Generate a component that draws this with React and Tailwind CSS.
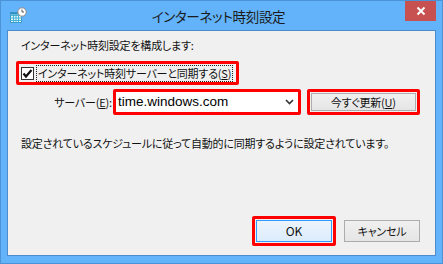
const jp = "font-['Noto_Sans_CJK_JP',sans-serif] [font-feature-settings:'palt'] whitespace-nowrap";

function AppIcon() {
  return (
    <svg width="18" height="18" viewBox="0 0 18 18">
      <rect x="1.5" y="5.5" width="11" height="10" fill="#e8f6fb" stroke="#3a9cc4" />
      <path d="M1.5 8.5H12.5M1.5 11H12.5M1.5 13.5H12.5M4.5 5.5V15.5M7 5.5V15.5M9.5 5.5V15.5" stroke="#47b4d8" strokeWidth="1" />
      <rect x="1.5" y="5.5" width="11" height="2" fill="#2f8fc0" />
      <circle cx="13" cy="5" r="4.2" fill="#ffffff" stroke="#8a8a8a" strokeWidth="1" />
      <path d="M13 2.6V5H15" stroke="#555" strokeWidth="1" fill="none" />
    </svg>
  );
}

function CheckBox() {
  return (
    <div className="w-[13px] h-[13px] shrink-0 border border-[#333333] bg-white flex items-center justify-center">
      <svg width="11" height="11" viewBox="0 0 11 11">
        <path d="M1.5 5.5L4 8.5L9.5 2" stroke="#111" strokeWidth="2.2" fill="none" />
      </svg>
    </div>
  );
}

export default function App() {
  return (
    <div className="w-[443px] h-[264px] bg-[#62b3f9] border border-[#4b93d6] flex flex-col overflow-hidden">
      {/* title bar */}
      <div className="h-[29px] grid grid-cols-[1fr_auto_1fr] pr-[6px]">
        <div className="pl-[8px] pt-[6px]">
          <AppIcon />
        </div>
        <div className={`${jp} text-[13.5px] tracking-[-0.3px] text-[#1b1b1b] pt-[5px] leading-[20px]`}>
          インターネット時刻設定
        </div>
        <div className="flex justify-end">
          <div className="w-[31px] h-[20px] bg-[#c75050] flex items-center justify-center">
            <svg width="10" height="10" viewBox="0 0 10 10">
              <path d="M1.5 1.5L8.5 8.5M8.5 1.5L1.5 8.5" stroke="#fff" strokeWidth="2" />
            </svg>
          </div>
        </div>
      </div>

      {/* client area */}
      <div className={`mx-[6px] mb-[7px] flex-1 border border-[#4a8ccc] bg-[#f0f0f0] flex flex-col pl-[8px] pr-[15px] pb-[9px] text-[11px] tracking-[-0.2px] text-[#111] ${jp}`}>
        <div className="ml-[5px] mt-[6px] leading-[16px]">インターネット時刻設定を構成します:</div>

        <div className="mt-[8px] w-[223px] h-[24px] border-[3px] border-[#ff0000] rounded-[2px] flex items-center pl-[2px]">
          <CheckBox />
          <div className="ml-[2px] px-[1px] border border-dotted border-[#222] leading-[15px]">
            インターネット時刻サーバーと同期する(<span className="underline">S</span>)
          </div>
        </div>

        <div className="mt-[4px] flex items-center">
          <div className="ml-[36px] w-[62px] mr-[1px] text-right leading-[16px]">
            サーバー(<span className="underline">E</span>):
          </div>
          <div className="w-[194px] h-[26px] border-[3px] border-[#ff0000] rounded-[2px] bg-white flex items-center pl-[2px] pr-[4px]">
            <span className="flex-1 font-['Liberation_Sans',sans-serif] text-[13.5px] tracking-normal text-black [font-feature-settings:normal]">time.windows.com</span>
            <svg width="9" height="6" viewBox="0 0 9 6">
              <path d="M1 1L4.5 4.5L8 1" stroke="#333" strokeWidth="1.6" fill="none" />
            </svg>
          </div>
          <div className="ml-[6px] w-[117px] h-[26px] border-[3px] border-[#ff0000] rounded-[2px] p-[1px]">
            <div className="h-full border border-[#acacac] bg-gradient-to-b from-[#f0f0f0] to-[#e5e5e5] flex items-center justify-center leading-[16px]">
              今すぐ更新(<span className="underline">U</span>)
            </div>
          </div>
        </div>

        <div className="ml-[5px] mt-[20px] leading-[16px]">
          設定されているスケジュールに従って自動的に同期するように設定されています。
        </div>

        <div className="mt-auto flex items-center justify-end">
          <div className="w-[84px] h-[30px] border-[3px] border-[#ff0000] rounded-[2px] p-[1px]">
            <div className="h-full border border-[#3399ff] bg-gradient-to-b from-[#ecf4fc] to-[#dcecfc] flex items-center justify-center text-[12px]">
              OK
            </div>
          </div>
          <div className="ml-[8px] w-[76px] h-[22px] border border-[#acacac] bg-gradient-to-b from-[#f0f0f0] to-[#e5e5e5] flex items-center justify-center">
            キャンセル
          </div>
        </div>
      </div>
    </div>
  );
}
